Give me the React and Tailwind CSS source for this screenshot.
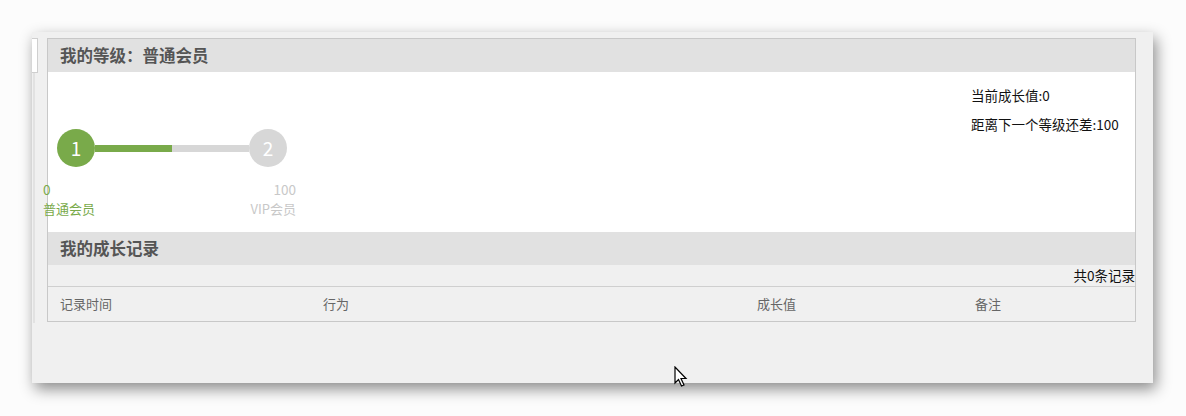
import React from 'react';

const FONT = { fontFamily: '"Noto Sans CJK SC", "Noto Sans", sans-serif' };

// level track: two step circles joined by a half-filled bar
const LevelTrack = () => (
  <div className="mt-[57px] -ml-[5px] w-[253px] flex flex-col">
    <div className="flex items-center pl-[14px] pr-[9px]">
      <div className="w-[38px] h-[38px] rounded-full bg-[#79aa4a] text-white text-[19px] flex items-center justify-center">1</div>
      <div className="flex-1 h-[7px] bg-[#d7d7d7] flex">
        <div className="w-[77px] h-full bg-[#79aa4a]" />
      </div>
      <div className="w-[38px] h-[38px] rounded-full bg-[#d7d7d7] text-white text-[19px] flex items-center justify-center">2</div>
    </div>
    <div className="mt-[13px] flex justify-between text-[13.5px] leading-[18px]">
      <span className="text-[#79aa4a]">0</span>
      <span className="text-[#c8c8c8]">100</span>
    </div>
    <div className="mt-[2px] flex justify-between text-[13px] leading-[18px]">
      <span className="text-[#79aa4a]">普通会员</span>
      <span className="text-[#c8c8c8]">VIP会员</span>
    </div>
  </div>
);

const SectionHead = ({ children }) => (
  <div className="h-[33px] bg-[#e1e1e1] flex items-center pl-3 text-[16.5px] font-bold text-[#555555]">
    {children}
  </div>
);

const Cursor = () => (
  <svg className="absolute left-[674px] top-[366px]" width="14" height="22" viewBox="0 0 14 22">
    <path d="M1 1 L1 17 L4.5 13.5 L7.5 20 L10 19 L7 12.5 L12 12.5 Z" fill="#ffffff" stroke="#000000" strokeWidth="1.2" strokeLinejoin="miter" />
  </svg>
);

export default function App() {
  const columns = ['记录时间', '行为', '成长值', '备注'];

  return (
    <div className="relative min-h-[416px] bg-[#fcfcfc] pt-8 pl-8" style={FONT}>
      <div className="w-[1121px] h-[351px] bg-[#f0f0f0] shadow-[3px_6px_14px_rgba(0,0,0,0.45)] flex pt-[6px]">
        <div className="w-[15px] flex flex-col">
          <div className="w-[6px] h-[35px] bg-white border-y border-r border-[#cfcfcf]" />
          <div className="w-[2px] ml-[1px] h-[250px] bg-[#e2e2e2]" />
        </div>

        <div className="w-[1089px] h-[284px] border border-[#c8c8c8] flex flex-col">
          <SectionHead>我的等级：普通会员</SectionHead>

          <div className="h-[160px] bg-white flex justify-between">
            <LevelTrack />
            <div className="w-[155px] mr-[9px] pt-[14px] text-[13.5px] leading-[18px] text-[#111111]">
              <div>当前成长值:0</div>
              <div className="mt-[11px]">距离下一个等级还差:100</div>
            </div>
          </div>

          <SectionHead>我的成长记录</SectionHead>

          <div className="h-[21px] flex items-center justify-end text-[13.5px] text-[#111111]">
            共0条记录
          </div>

          <div className="flex-1 border-t border-[#cfcfcf] grid grid-cols-[263px_434px_218px_1fr] items-center text-[13px] text-[#666666]">
            {columns.map(col => (
              <div key={col} className="pl-3">{col}</div>
            ))}
          </div>
        </div>
      </div>
      <Cursor />
    </div>
  );
}
